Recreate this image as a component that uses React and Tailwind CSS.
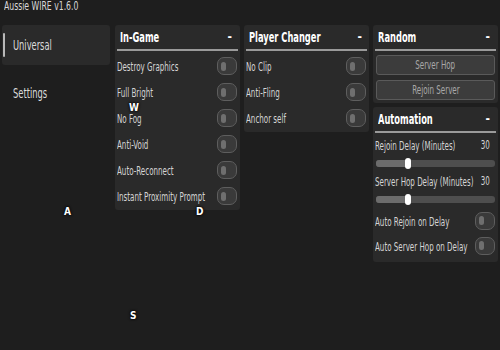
import React from "react";

const font = "font-['Liberation_Sans_Narrow','DejaVu_Sans_Condensed',sans-serif]";

// the reference text is very narrow, squeeze it horizontally
function T({ children, className = "", origin = "origin-left" }) {
  return (
    <span className={`inline-block scale-x-[0.66] whitespace-nowrap ${origin} ${className}`}>
      {children}
    </span>
  );
}

function Toggle() {
  return (
    <div className="flex h-[18px] w-[20px] shrink-0 items-center rounded-[7px] border border-[#5e5e5e] bg-[#3a3a3a] pl-[3px]">
      <div className="h-[9px] w-[5px] rounded-full bg-[#6f6f6f]" />
    </div>
  );
}

function Header({ title }) {
  return (
    <div className="mx-[2px] flex h-[26px] items-center justify-between border-b-2 border-[#9a9a9a] px-[3px]">
      <T className="text-[14px] font-bold text-white">{title}</T>
      <span className="pr-[3px] text-[12px] font-bold text-white">-</span>
    </div>
  );
}

function ToggleRow({ label, h = "h-[26px]" }) {
  return (
    <div className={`flex ${h} items-center justify-between pl-[2px] pr-[3px]`}>
      <div className="w-0 flex-1">
        <T className="text-[12px] text-[#d4d4d4]">{label}</T>
      </div>
      <Toggle />
    </div>
  );
}

function Slider({ label, value }) {
  return (
    <div>
      <div className="flex h-[18px] items-center justify-between pl-[2px] pr-[8px]">
        <div className="w-0 flex-1">
          <T className="text-[12px] text-[#d4d4d4]">{label}</T>
        </div>
        <T origin="origin-right" className="text-[12px] text-[#d4d4d4]">
          {value}
        </T>
      </div>
      <div className="flex h-[18px] items-center px-[3px]">
        <div className="relative h-[7px] w-full rounded-[3px] bg-[#4e4e4e]">
          <div className="h-full w-[32px] rounded-l-[3px] bg-[#6c6c6c]" />
          <div className="absolute left-[29px] top-[-2px] h-[11px] w-[6px] rounded-full bg-white" />
        </div>
      </div>
    </div>
  );
}

function Key({ children, className }) {
  return (
    <span
      className={`absolute text-[10px] font-bold text-white [text-shadow:0_0_3px_#000,0_0_2px_#000] ${className}`}
    >
      {children}
    </span>
  );
}

export default function App() {
  return (
    <div className={`relative h-[350px] w-[500px] overflow-hidden bg-[#1e1e1e] ${font}`}>
      <div className="-mt-[2px] h-[27px] pl-[4px] text-[13px] leading-[15px] text-[#d8d8d8]">
        <T>Aussie WIRE v1.6.0</T>
      </div>
      <div className="flex gap-[4px] pl-[2px]">
        <div className="mr-[1px] flex w-[108px] flex-col gap-[8px]">
          <div className="flex h-[40px] items-center rounded-[3px] bg-[#2a2a2a]">
            <div className="ml-[1px] h-[24px] w-[2px] rounded bg-[#b8b8b8]" />
            <T className="ml-[8px] text-[14px] text-[#dcdcdc]">Universal</T>
          </div>
          <div className="flex h-[40px] items-center">
            <T className="ml-[11px] text-[14px] text-[#dcdcdc]">Settings</T>
          </div>
        </div>

        <div className="flex h-[185px] w-[125px] flex-col rounded-[3px] bg-[#2a2a2a]">
          <Header title="In-Game" />
          <div className="pt-[2px]">
            <ToggleRow label="Destroy Graphics" />
            <ToggleRow label="Full Bright" />
            <ToggleRow label="No Fog" />
            <ToggleRow label="Anti-Void" />
            <ToggleRow label="Auto-Reconnect" />
            <ToggleRow label="Instant Proximity Prompt" />
          </div>
        </div>

        <div className="flex h-[107px] w-[125px] flex-col rounded-[3px] bg-[#2a2a2a]">
          <Header title="Player Changer" />
          <div className="pt-[2px]">
            <ToggleRow label="No Clip" />
            <ToggleRow label="Anti-Fling" />
            <ToggleRow label="Anchor self" />
          </div>
        </div>

        <div className="flex w-[125px] flex-col gap-[4px]">
          <div className="h-[78px] rounded-[3px] bg-[#2a2a2a]">
            <Header title="Random" />
            <div className="flex flex-col gap-[5px] px-[3px] pt-[4px]">
              <button className="h-[20px] rounded-[3px] border border-[#5a5a5a] bg-[#3c3c3c] text-[12px] text-[#a8a8a8]">
                <T origin="origin-center">Server Hop</T>
              </button>
              <button className="h-[20px] rounded-[3px] border border-[#5a5a5a] bg-[#3c3c3c] text-[12px] text-[#a8a8a8]">
                <T origin="origin-center">Rejoin Server</T>
              </button>
            </div>
          </div>
          <div className="h-[155px] rounded-[3px] bg-[#2a2a2a]">
            <Header title="Automation" />
            <div className="pt-[3px]">
              <Slider label="Rejoin Delay (Minutes)" value="30" />
              <Slider label="Server Hop Delay (Minutes)" value="30" />
              <ToggleRow label="Auto Rejoin on Delay" h="h-[25px]" />
              <ToggleRow label="Auto Server Hop on Delay" h="h-[25px]" />
            </div>
          </div>
        </div>
      </div>

      <Key className="left-[129px] top-[100px]">W</Key>
      <Key className="left-[196px] top-[204px]">D</Key>
      <Key className="left-[64px] top-[204px]">A</Key>
      <Key className="left-[130px] top-[308px]">S</Key>
    </div>
  );
}
